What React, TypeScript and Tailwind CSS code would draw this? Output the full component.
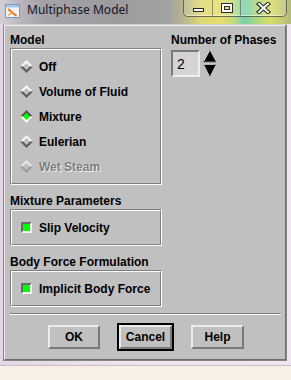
import React from "react";

const dlgFont = { fontFamily: '"Liberation Sans", Arial, Helvetica, sans-serif' };

function Diamond({ state }: { state: "off" | "on" | "disabled" }) {
  const top = state === "on" ? "#585858" : state === "disabled" ? "#e6e6e6" : "#f6f6f6";
  const bot = state === "on" ? "#f6f6f6" : state === "disabled" ? "#9c9c9c" : "#5c5c5c";
  const fill = state === "on" ? "#00ff00" : "#c0c0c0";
  return (
    <svg width="13" height="13" viewBox="0 0 13 13" className="shrink-0">
      <polygon points="0,6.5 6.5,0 13,6.5" fill={top} />
      <polygon points="0,6.5 6.5,13 13,6.5" fill={bot} />
      <polygon points="3,6.5 6.5,3 10,6.5 6.5,10" fill={fill} />
    </svg>
  );
}

function Etched({ children, className }: { children: React.ReactNode; className?: string }) {
  return (
    <div className={"border border-t-[#808080] border-l-[#808080] border-b-white border-r-white " + (className ?? "")}>
      <div className="h-full border border-t-white border-l-white border-b-[#808080] border-r-[#808080]">
        {children}
      </div>
    </div>
  );
}

function Radio({ label, state }: { label: string; state: "off" | "on" | "disabled" }) {
  return (
    <div className="h-[25px] flex items-center pl-[8px]">
      <Diamond state={state} />
      <span
        className={
          "ml-[6px] text-[12px] leading-[14px] font-bold " +
          (state === "disabled" ? "text-[#7e7e7e] [text-shadow:1px_1px_0_#f0f0f0]" : "text-black")
        }
      >
        {label}
      </span>
    </div>
  );
}

function Check({ label }: { label: string }) {
  return (
    <div className="h-full flex items-center pl-[9px]">
      <div className="w-[11px] h-[11px] border-2 border-t-[#6a6a6a] border-l-[#6a6a6a] border-b-[#f4f4f4] border-r-[#f4f4f4] bg-[#00ff00]" />
      <span className="ml-[7px] text-[12px] leading-[14px] font-bold text-black">{label}</span>
    </div>
  );
}

function Btn({ label, w }: { label: string; w: string }) {
  return (
    <div
      className={
        w +
        " h-[24px] flex items-center justify-center bg-[#c0c0c0] border-2 border-t-[#ececec] border-l-[#ececec] border-b-[#7a7a7a] border-r-[#7a7a7a] text-[12px] leading-[14px] font-bold text-black"
      }
    >
      {label}
    </div>
  );
}

export default function App() {
  return (
    <div className="w-[291px] h-[380px] bg-[#f8efe6] overflow-hidden">
      <div className="w-[291px] h-[366px] flex flex-col bg-[linear-gradient(90deg,#e4d6e4_0%,#eee4ee_40%,#efe6f2_100%)] border-b border-[#c8bec8]">
        {/* Title bar */}
        <div className="h-[24px] shrink-0 flex items-start bg-[linear-gradient(90deg,#d6d0d6_0%,#bdb9be_6%,#a3a2a6_15%,#9c9b9e_40%,#a3a2a1_58%,#b8b48f_63%,#ddd873_69%,#e6de6a_76%,#c6da7a_80%,#7acfb0_84%,#a8d77e_88%,#dadd66_93%,#b4ba7a_100%)]">
          <svg width="15" height="14" viewBox="0 0 15 14" className="ml-[5px] mt-[4px] shrink-0">
            <rect x="0.5" y="0.5" width="14" height="13" fill="#eef4fb" stroke="#6f9bd1" />
            <rect x="1" y="1" width="13" height="2.5" fill="#a8c8ec" />
            <path d="M3 5 L11.5 12" stroke="#f07a10" strokeWidth="2" />
            <path d="M3 11.5 L8 7.5" stroke="#f0a040" strokeWidth="1.5" />
          </svg>
          <span
            className="ml-[7px] mt-[3px] text-[12px] leading-[14px] text-[#15151f]"
            style={{ fontFamily: '"Noto Sans", "Open Sans", sans-serif' }}
          >
            Multiphase Model
          </span>
          <div className="flex-1" />
          <div className="mr-[4px] w-[104px] h-[17px] rounded-b-[5px] border border-t-0 border-[#3c3c3c]/70 bg-white/15 flex overflow-hidden shadow-[inset_0_-1px_0_rgba(255,255,255,0.5)]">
            <div className="w-[29px] flex items-end justify-center pb-[4px] border-r border-[#3c3c3c]/50">
              <div className="w-[11px] h-[4px] bg-white border border-[#2a2a2a]" />
            </div>
            <div className="w-[28px] flex items-center justify-center border-r border-[#3c3c3c]/50">
              <svg width="12" height="10" viewBox="0 0 12 10">
                <rect x="0.5" y="0.5" width="11" height="9" fill="none" stroke="#2a2a2a" />
                <rect x="2" y="2" width="8" height="6" fill="none" stroke="#ffffff" strokeWidth="2" />
                <rect x="3.5" y="3.5" width="5" height="3" fill="none" stroke="#2a2a2a" />
              </svg>
            </div>
            <div className="flex-1 flex items-center justify-center">
              <svg width="15" height="12" viewBox="0 0 15 12">
                <path d="M3 2 L12 10 M12 2 L3 10" stroke="#2a2a2a" strokeWidth="4.2" strokeLinecap="square" />
                <path d="M3 2 L12 10 M12 2 L3 10" stroke="#ffffff" strokeWidth="2" strokeLinecap="square" />
              </svg>
            </div>
          </div>
        </div>

        {/* Client area */}
        <div className="ml-[3px] w-[284px] h-[337px] shrink-0 border border-[#858585] border-t-[#cfcfcf]">
          <div
            className="h-full bg-[#c0c0c0] border border-t-[#ececec] border-l-[#ececec] border-b-[#6e6e6e] border-r-[#6e6e6e] flex flex-col"
            style={dlgFont}
          >
            <div className="flex pt-[7px] pl-[5px]">
              {/* left column */}
              <div className="w-[152px] flex flex-col">
                <div className="h-[14px] text-[12px] leading-[14px] font-bold">Model</div>
                <Etched className="mt-[1px] h-[137px]">
                  <div className="pt-[4px]">
                    <Radio label="Off" state="off" />
                    <Radio label="Volume of Fluid" state="off" />
                    <Radio label="Mixture" state="on" />
                    <Radio label="Eulerian" state="off" />
                    <Radio label="Wet Steam" state="disabled" />
                  </div>
                </Etched>
                <div className="mt-[9px] h-[14px] text-[12px] leading-[14px] font-bold">Mixture Parameters</div>
                <Etched className="mt-[1px] h-[37px]">
                  <Check label="Slip Velocity" />
                </Etched>
                <div className="mt-[9px] h-[14px] text-[12px] leading-[14px] font-bold">Body Force Formulation</div>
                <Etched className="mt-[1px] h-[37px]">
                  <Check label="Implicit Body Force" />
                </Etched>
              </div>
              {/* right column */}
              <div className="ml-[9px] flex flex-col">
                <div className="h-[14px] text-[12px] leading-[14px] font-bold whitespace-nowrap">Number of Phases</div>
                <div className="mt-[3px] flex items-start">
                  <div className="w-[29px] h-[27px] border-2 border-t-[#7a7a7a] border-l-[#7a7a7a] border-b-[#eeeeee] border-r-[#eeeeee] bg-[#d4d4d4] flex items-center pl-[4px] text-[14px] leading-[16px] text-black">
                    2
                  </div>
                  <svg width="13" height="27" viewBox="0 0 13 27" className="ml-[3px]">
                    <polygon points="6.5,0 13,12 0,12" fill="#000" />
                    <path d="M6.5 0.5 L0.5 11.5" stroke="#f0f0f0" strokeWidth="1" />
                    <path d="M0.5 11.8 L12.5 11.8" stroke="#555" strokeWidth="1" />
                    <polygon points="0,14 13,14 6.5,27" fill="#000" />
                    <path d="M0.5 14.3 L12.5 14.3" stroke="#e8e8e8" strokeWidth="1" />
                    <path d="M0.5 14.5 L6.5 26.5" stroke="#d0d0d0" strokeWidth="1" />
                  </svg>
                </div>
              </div>
            </div>

            {/* separator */}
            <div className="ml-[5px] mr-[4px] mt-[6px]">
              <div className="h-px bg-[#808080]" />
              <div className="h-px bg-white" />
            </div>

            {/* buttons */}
            <div className="mt-[8px] ml-[43px] flex items-center gap-[17px]">
              <Btn label="OK" w="w-[52px]" />
              <div className="border-2 border-black">
                <Btn label="Cancel" w="w-[53px]" />
              </div>
              <Btn label="Help" w="w-[53px]" />
            </div>
          </div>
        </div>
      </div>
    </div>
  );
}
